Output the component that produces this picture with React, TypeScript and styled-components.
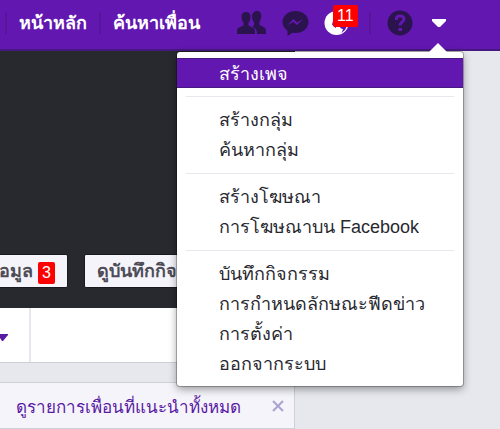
import React from "react";
import styled, { createGlobalStyle, css } from "styled-components";

const purple = "#6217b0";
const ink = "#2b144d";

const GlobalStyle = createGlobalStyle`
  * { box-sizing: border-box; }
  body {
    margin: 0;
    overflow: hidden;
    background: #e7e8ee;
    color: #28282f;
    font: 18px/30px "Liberation Sans", Arial, sans-serif;
  }
  button { font: inherit; color: inherit; border: 0; padding: 0; background: none; cursor: pointer; }
  a { color: inherit; text-decoration: none; }
`;

const Page = styled.div`
  position: relative;
  min-height: 100vh;
  overflow: hidden;
`;

const Header = styled.header`
  display: flex;
  align-items: center;
  justify-content: flex-end;
  height: 51px;
  padding: 0 54px 4px 0;
  background: ${purple};
  border-bottom: 2px solid #45197f;
`;

const Divider = styled.span`
  flex: none;
  width: 2px;
  height: 22px;
  background: #56169b;
`;

const HeaderLink = styled.a`
  flex: none;
  padding: 0 12px;
  color: #fff;
  font-weight: bold;
  white-space: nowrap;
`;

const IconGroup = styled.div`
  display: flex;
  align-items: center;
  gap: 15px;
  margin: 0 19px 0 25px;
`;

const IconButton = styled.button<{ $tone?: string }>`
  position: relative;
  flex: none;
  display: flex;
  color: ${(p) => p.$tone ?? ink};
`;

const HelpButton = styled(IconButton)`
  margin: 0 19px 0 16px;
`;

const Count = styled.span<{ $floating?: boolean }>`
  display: inline-block;
  padding: 0 4px;
  margin-top: 3px;
  background: #fe0000;
  color: #fff;
  border-radius: 2px;
  font-size: 16px;
  font-weight: normal;
  line-height: 22px;
  ${(p) =>
    p.$floating &&
    css`
      position: absolute;
      top: -5px;
      left: 9px;
      margin-top: 0;
    `}
`;

const Column = styled.main`
  width: 59%;
`;

const Cover = styled.section`
  display: flex;
  align-items: flex-end;
  justify-content: flex-end;
  gap: 16px;
  height: 257px;
  padding: 0 62px 20px 0;
  overflow: hidden;
  background: #28282f;
`;

const CoverButton = styled.button`
  flex: none;
  display: flex;
  align-items: center;
  gap: 5px;
  height: 34px;
  padding: 0 12px;
  border: 1px solid #19191f;
  border-radius: 2px;
  background: #f5f4fa;
  color: #4d4c57;
  font-weight: bold;
  white-space: nowrap;
`;

const TabBar = styled.nav`
  display: flex;
  height: 55px;
  background: #fff;
  border-bottom: 1px solid #cfcfd9;
`;

const MoreTab = styled.button`
  display: flex;
  align-items: center;
  justify-content: flex-start;
  width: 31px;
  padding-top: 6px;
  border-right: 2px solid #e7e7ee;
  color: #5a1ba3;
  overflow: hidden;
`;

const Notice = styled.section`
  display: flex;
  align-items: center;
  justify-content: space-between;
  height: 47px;
  margin-top: 19px;
  padding: 4px 10px 0 16px;
  background: #f5f4fa;
  border: solid #cfcfd9;
  border-width: 1px 1px 1px 0;
`;

const NoticeLink = styled.a`
  color: #5a1ba3;
  font-size: 17px;
  white-space: nowrap;
`;

const CloseButton = styled.button`
  display: flex;
  margin-bottom: 4px;
  color: #aaa2cf;
`;

const Menu = styled.nav`
  position: absolute;
  top: 52px;
  right: 37px;
  width: 286px;
  padding: 6px 0 7px;
  background: #fff;
  border-radius: 3px;
  box-shadow: 0 0 0 1px rgba(0, 0, 0, 0.25), 0 3px 8px rgba(0, 0, 0, 0.4);

  &::before {
    content: "";
    position: absolute;
    right: 16px;
    bottom: 100%;
    border: 9px solid transparent;
    border-top: 0;
    border-bottom-color: #fff;
  }
`;

const MenuGroup = styled.ul`
  margin: 0;
  padding: 0;
  list-style: none;

  & + &::before {
    content: "";
    display: block;
    height: 1px;
    margin: 8px 9px;
    background: #e7e7ee;
  }
`;

const MenuLink = styled.a<{ $active?: boolean }>`
  display: block;
  height: 30px;
  padding: 0 42px;
  white-space: nowrap;
  ${(p) =>
    p.$active &&
    css`
      background: ${purple};
      border: solid #45197f;
      border-width: 1px 0;
      color: #fff;
    `}
`;

const groups = [
  ["สร้างเพจ"],
  ["สร้างกลุ่ม", "ค้นหากลุ่ม"],
  ["สร้างโฆษณา", "การโฆษณาบน Facebook"],
  ["บันทึกกิจกรรม", "การกำหนดลักษณะฟีดข่าว", "การตั้งค่า", "ออกจากระบบ"],
];

const FriendsIcon = () => (
  <svg width="30" height="26" viewBox="0 0 30 26" fill="currentColor" aria-hidden="true">
    <path d="M20 1c3 0 4.500 2 4.200 5.500-.2 3-1.200 4.500-1.700 5.500v3l5 2.500c1 .8 1.500 2 1.500 6.500h-9c0-3-.7-4.500-2.500-6l-2-1.500 1.500-1.500v-3c-1.500-1.500-2.300-4-2-6.500C15.700 2.500 17.500 1 20 1z" />
    <path d="M9 2c3.200 0 4.700 2 4.500 5-.2 3-1 4.500-2 5.500v3l5 2.500c1.200.8 1.500 2 1.500 6H0c0-4.500.3-5.500 1.500-6.200l5-2.300v-3c-1-1-2-2.500-2-5.500C4.400 4 5.800 2 9 2z" />
  </svg>
);

const MessengerIcon = () => (
  <svg width="27" height="26" viewBox="0 0 27 26" aria-hidden="true">
    <path d="M13.500 1C6.300 1 .5 5.800.5 12c0 3.800 2 6.800 5 8.800V26l5-3.300c1 .2 2 .3 3 .3C20.700 23 26.500 18.200 26.500 12S20.700 1 13.500 1z" fill="currentColor" />
    <path d="M5.500 15l6-6 3.500 3.500L21 9l-6 6-3.500-3z" fill={purple} />
  </svg>
);

const GlobeIcon = () => (
  <svg width="26" height="26" viewBox="0 0 26 26" aria-hidden="true">
    <circle cx="12.500" cy="13" r="12" fill="currentColor" />
    <path d="M9 11h14v5l-2 4-3 2.500-3-1-1-2.500-3-1.500-3-3z" fill={purple} />
    <path d="M12 17l3-1 2 2.500 2 .5-1 3-3 1-3-2z" fill="currentColor" />
  </svg>
);

const HelpIcon = () => (
  <svg width="26" height="26" viewBox="0 0 26 26" fill="none" aria-hidden="true">
    <circle cx="13" cy="13" r="12.500" fill="currentColor" />
    <path d="M9.500 10V8.500C9.500 6.500 11 6 13 6s4 .8 4 3c0 3-4 3-4 6.500" stroke={purple} strokeWidth="3" />
    <path d="M11.500 18h3.500v3h-3.500z" fill={purple} />
  </svg>
);

const Caret = () => (
  <svg width="14" height="8" viewBox="0 0 14 8" fill="currentColor" aria-hidden="true">
    <path d="M0 0h14v2L8 8H6L0 2z" />
  </svg>
);

const TabCaret = () => (
  <svg width="8" height="8" viewBox="0 0 8 8" fill="currentColor" aria-hidden="true">
    <path d="M0 0h8v1L3 7H2L0 4z" />
  </svg>
);

const CloseIcon = () => (
  <svg width="12" height="12" viewBox="0 0 12 12" stroke="currentColor" strokeWidth="2" aria-hidden="true">
    <path d="M1 1l10 10M11 1L1 11" />
  </svg>
);

export default function App() {
  return (
    <Page>
      <GlobalStyle />
      <Header>
        <Divider />
        <HeaderLink href="#home">หน้าหลัก</HeaderLink>
        <Divider />
        <HeaderLink href="#friends">ค้นหาเพื่อน</HeaderLink>
        <IconGroup>
          <IconButton aria-label="คำขอเป็นเพื่อน"><FriendsIcon /></IconButton>
          <IconButton aria-label="ข้อความ"><MessengerIcon /></IconButton>
          <IconButton $tone="#fff" aria-label="การแจ้งเตือน">
            <GlobeIcon />
            <Count $floating>11</Count>
          </IconButton>
        </IconGroup>
        <Divider />
        <HelpButton aria-label="ความช่วยเหลือ"><HelpIcon /></HelpButton>
        <IconButton $tone="#fff" aria-label="เมนูบัญชี" aria-expanded="true"><Caret /></IconButton>
      </Header>
      <Column>
        <Cover>
          <CoverButton>อัพเดตข้อมูล <Count>3</Count></CoverButton>
          <CoverButton>ดูบันทึกกิจกรรม</CoverButton>
        </Cover>
        <TabBar>
          <MoreTab aria-label="เพิ่มเติม"><TabCaret /></MoreTab>
        </TabBar>
        <Notice>
          <NoticeLink href="#suggestions">ดูรายการเพื่อนที่แนะนำทั้งหมด</NoticeLink>
          <CloseButton aria-label="ปิด"><CloseIcon /></CloseButton>
        </Notice>
      </Column>
      <Menu>
        {groups.map((items, g) => (
          <MenuGroup key={items[0]}>
            {items.map((item, i) => (
              <li key={item}>
                <MenuLink href="#menu" $active={g === 0 && i === 0}>{item}</MenuLink>
              </li>
            ))}
          </MenuGroup>
        ))}
      </Menu>
    </Page>
  );
}
